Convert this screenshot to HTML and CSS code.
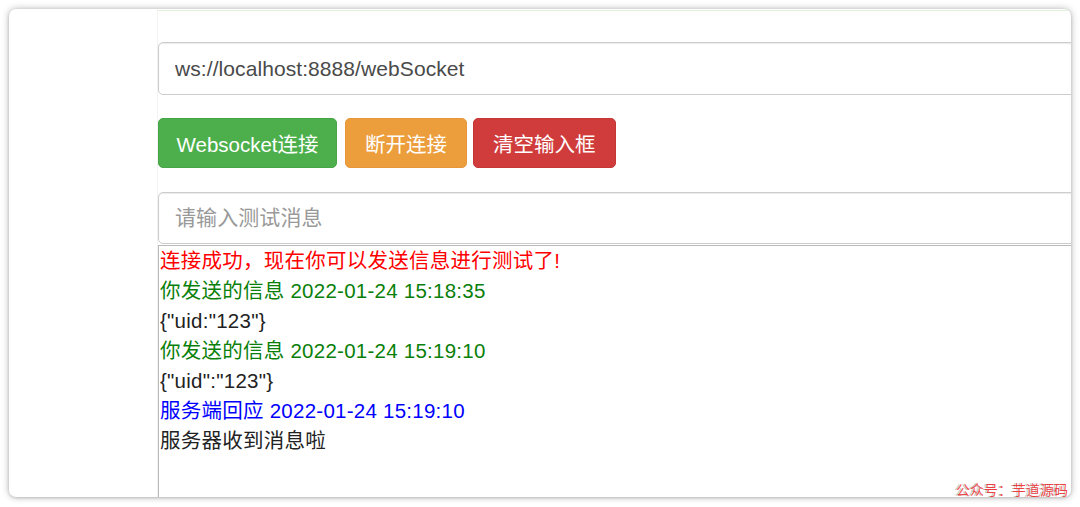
FILE: index.html
```html
<!DOCTYPE html>
<html lang="zh">
<head>
<meta charset="utf-8">
<title>WebSocket 测试</title>
<link rel="stylesheet" href="styles.css">
</head>
<body>
<div class="card">
  <div class="page">
    <input class="field url" type="text" value="ws://localhost:8888/webSocket">
    <div class="buttons">
      <button class="btn btn-green">Websocket连接</button>
      <button class="btn btn-orange">断开连接</button>
      <button class="btn btn-red">清空输入框</button>
    </div>
    <input class="field msg" type="text" placeholder="请输入测试消息">
    <div class="log">
      <div class="red">连接成功，现在你可以发送信息进行测试了!</div>
      <div class="green">你发送的信息 2022-01-24 15:18:35</div>
      <div class="dark">{"uid:"123"}</div>
      <div class="green">你发送的信息 2022-01-24 15:19:10</div>
      <div class="dark">{"uid":"123"}</div>
      <div class="blue">服务端回应 2022-01-24 15:19:10</div>
      <div class="dark">服务器收到消息啦</div>
    </div>
  </div>
  <div class="watermark">公众号：芋道源码</div>
</div>
</body>
</html>
```

FILE: styles.css
```css
html, body {
  margin: 0;
  padding: 0;
  background: #ffffff;
  overflow: hidden;
  height: 507px;
}
body {
  font-family: "Liberation Sans", "Noto Sans CJK SC", sans-serif;
  padding-top: 9px;
  box-sizing: border-box;
}
.card {
  position: relative;
  margin-left: 9px;
  width: 1062px;
  height: 488px;
  background: #fff;
  border-radius: 7px;
  box-shadow: 0 0 7px rgba(0, 0, 0, 0.3), 0 1px 3px rgba(0, 0, 0, 0.12);
  overflow: hidden;
}
.page {
  margin-left: 148px;
  margin-top: 1px;
  width: 1000px;
  height: 100%;
  border-left: 1px solid #f3f3f3;
  border-top: 1px solid #e2f2da;
  padding-top: 31px;
  box-sizing: border-box;
  display: flex;
  flex-direction: column;
}
.field {
  display: block;
  width: 1000px;
  box-sizing: border-box;
  margin: 0;
  border: 1px solid #cccccc;
  border-radius: 5px;
  box-shadow: inset 0 1px 1px rgba(0, 0, 0, 0.08);
  padding: 0 16px;
  font-family: "Liberation Sans", "Noto Sans CJK SC", sans-serif;
  font-size: 21px;
  letter-spacing: 0.08px;
  color: #4a4a4a;
  background: #fff;
  outline: none;
}
.field::placeholder {
  color: #999999;
}
.url {
  height: 53px;
}
.msg {
  height: 52px;
  margin-top: 24px;
}
.buttons {
  display: flex;
  margin-top: 23px;
  gap: 6px;
}
.btn {
  height: 50px;
  padding: 0 19px;
  border-radius: 5px;
  font-family: "Liberation Sans", "Noto Sans CJK SC", sans-serif;
  font-size: 20.5px;
  color: #ffffff;
  border: 1px solid transparent;
  cursor: pointer;
}
.btn-green {
  background: #4daf4c;
  border-color: #46a546;
  margin-right: 2px;
  padding: 0 17.5px;
}
.btn-orange {
  background: #ec9e3c;
  border-color: #e8963a;
}
.btn-red {
  background: #d03c3c;
  border-color: #c53636;
}
.log {
  flex: 1;
  margin-top: 1px;
  border: 1px solid #b9b9b9;
  padding-left: 1px;
  font-size: 20.5px;
  letter-spacing: 0.25px;
  line-height: 30px;
  color: #222222;
}
.red { color: #ff0000; }
.green { color: #0a800a; }
.blue { color: #0000ff; }
.dark { color: #222222; }
.watermark {
  position: absolute;
  right: 3px;
  bottom: -1px;
  font-size: 14px;
  line-height: 16px;
  white-space: nowrap;
  color: rgba(240, 40, 40, 0.85);
  text-shadow: -2px 0 rgba(120, 120, 120, 0.45);
}
```
